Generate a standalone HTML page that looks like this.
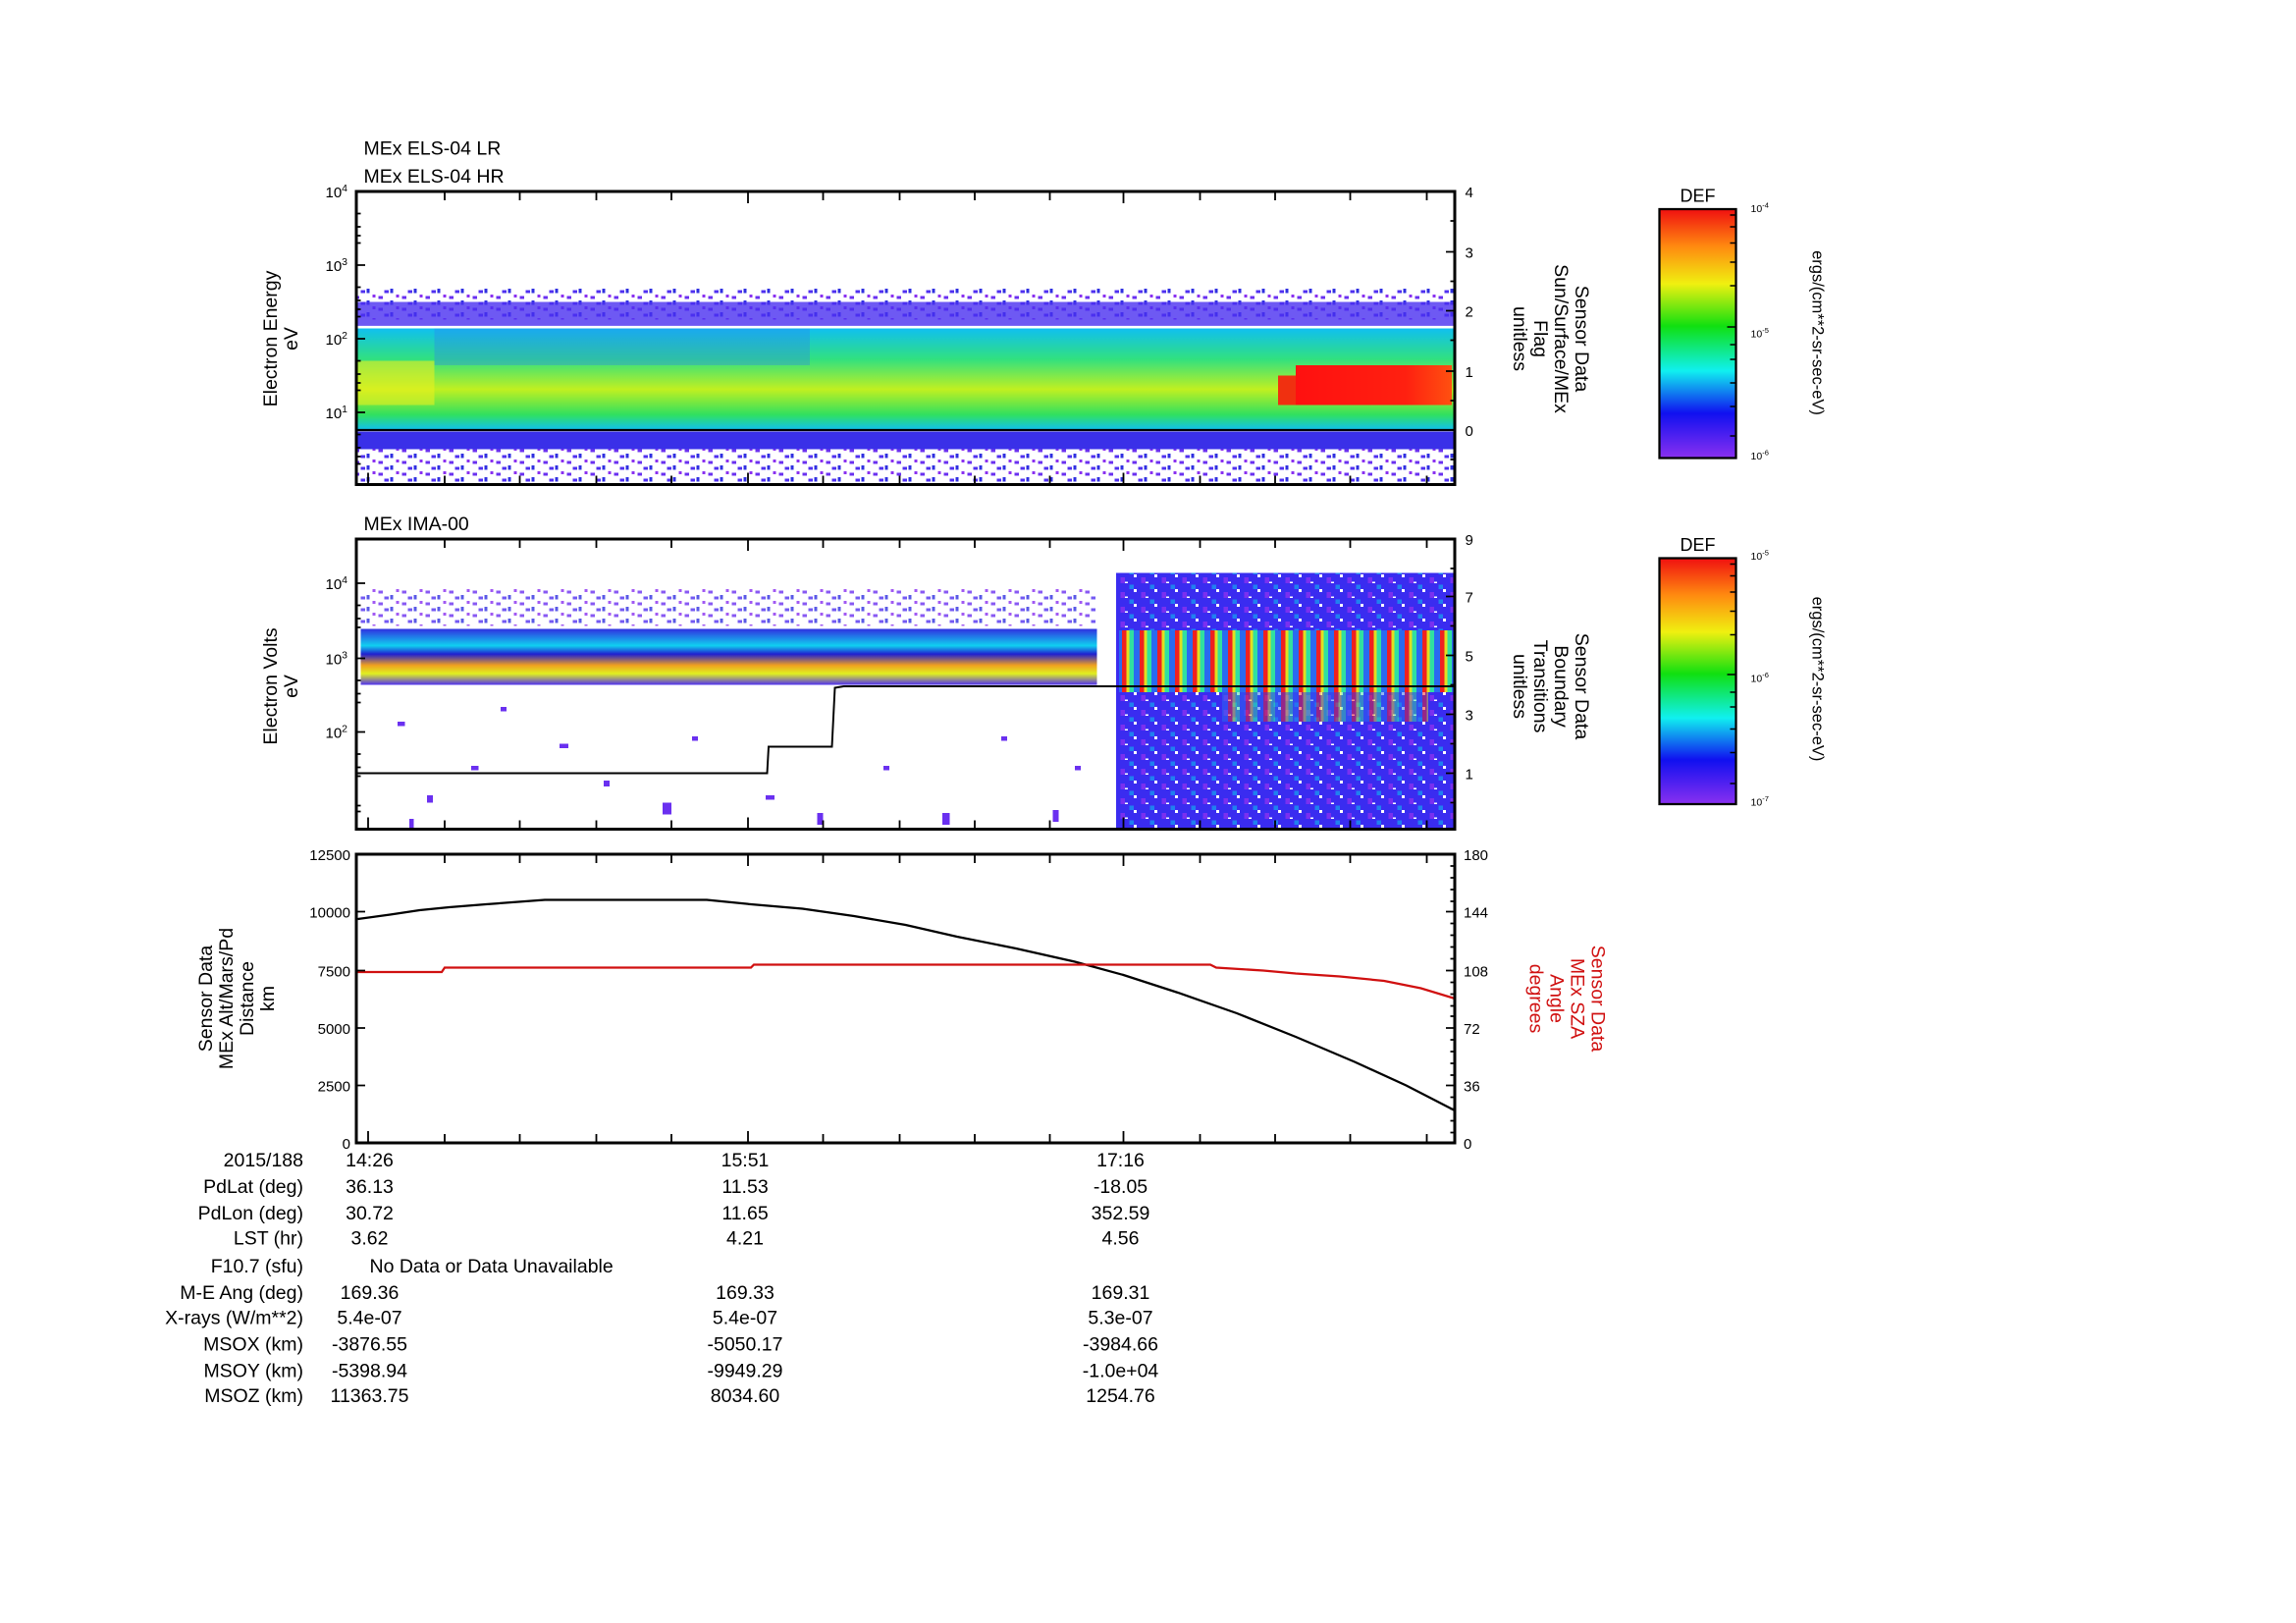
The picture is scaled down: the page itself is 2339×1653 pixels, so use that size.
<!DOCTYPE html>
<html><head><meta charset="utf-8"><style>
html,body{margin:0;padding:0;background:#fff;}
svg{display:block;}
text{font-family:"Liberation Sans",sans-serif;}
</style></head><body>
<svg width="2339" height="1653" viewBox="0 0 1559.33 1102" xmlns="http://www.w3.org/2000/svg">
<defs>
<linearGradient id="cb" x1="0" y1="0" x2="0" y2="1">
<stop offset="0" stop-color="#f01010"/><stop offset="0.15" stop-color="#ff8a10"/><stop offset="0.3" stop-color="#f0f010"/><stop offset="0.47" stop-color="#10e010"/><stop offset="0.65" stop-color="#10f0f0"/><stop offset="0.82" stop-color="#1010f0"/><stop offset="1" stop-color="#8a30f0"/>
</linearGradient>
<linearGradient id="p1b" x1="0" y1="0" x2="0" y2="1">
<stop offset="0" stop-color="#10c0f0"/><stop offset="0.3" stop-color="#30e080"/><stop offset="0.6" stop-color="#c0f020"/><stop offset="0.85" stop-color="#30e060"/><stop offset="1" stop-color="#10c0f0"/>
</linearGradient>
<linearGradient id="red" x1="0" y1="0" x2="1" y2="0">
<stop offset="0" stop-color="#ff1010"/><stop offset="0.7" stop-color="#ff2010"/><stop offset="1" stop-color="#ff5010"/>
</linearGradient>
<linearGradient id="b2" x1="0" y1="0" x2="0" y2="1">
<stop offset="0" stop-color="#3030e0"/><stop offset="0.3" stop-color="#10d0f0"/><stop offset="0.45" stop-color="#2020d0"/><stop offset="0.65" stop-color="#f0a020"/><stop offset="0.8" stop-color="#e0f020"/><stop offset="1" stop-color="#5030f0"/>
</linearGradient>
<pattern id="stripes" x="760" y="0" width="12" height="10" patternUnits="userSpaceOnUse">
<rect width="12" height="10" fill="#2a6af0"/><rect x="2" width="3" height="10" fill="#f02020"/><rect x="5" width="2" height="10" fill="#e0e020"/><rect x="7" width="3" height="10" fill="#30e0a0"/>
</pattern>
<pattern id="mottle" width="14" height="10" patternUnits="userSpaceOnUse">
<rect width="14" height="10" fill="#3a2cf0"/><rect x="0" y="0" width="2" height="2" fill="#fff"/><rect x="8" y="5" width="2" height="1" fill="#fff"/><rect x="5" y="2" width="3" height="4" fill="#7a30f0"/><rect x="11" y="7" width="3" height="3" fill="#2080f0"/>
</pattern>
<pattern id="spk" width="16" height="8" patternUnits="userSpaceOnUse">
<rect width="16" height="8" fill="#fff"/><rect x="1" y="1" width="3" height="2" fill="#6a30f0"/><rect x="9" y="4" width="2" height="3" fill="#3030e0"/><rect x="13" y="0" width="2" height="2" fill="#8a30f0"/><rect x="5" y="5" width="3" height="2" fill="#5030f0"/>
</pattern>
</defs>

<!-- Panel 1 -->
<text x="247" y="105" font-size="13">MEx ELS-04 LR</text>
<text x="247" y="124" font-size="13">MEx ELS-04 HR</text>
<rect x="243" y="195" width="745" height="22" fill="url(#spk)"/>
<rect x="243" y="205" width="745" height="17" fill="#4a30f0" opacity="0.8"/>
<rect x="243" y="223" width="745" height="69" fill="url(#p1b)"/>
<rect x="295" y="223" width="255" height="25" fill="#2a80f0" opacity="0.35"/>
<rect x="243" y="245" width="52" height="30" fill="#e8f020" opacity="0.6"/>
<rect x="243" y="293" width="745" height="12" fill="#3a30e8"/>
<rect x="243" y="305" width="745" height="24" fill="url(#spk)"/>
<rect x="880" y="248" width="106" height="27" fill="url(#red)"/>
<rect x="868" y="255" width="12" height="20" fill="#f03010"/>
<line x1="243" y1="222" x2="988" y2="222" stroke="#fff" stroke-width="1.5"/>
<line x1="243" y1="292" x2="988" y2="292" stroke="#000" stroke-width="1.5"/>
<rect x="242" y="130" width="746" height="199" fill="none" stroke="#000" stroke-width="2"/>

<!-- Panel 2 -->
<text x="247" y="360" font-size="13">MEx IMA-00</text>
<rect x="245" y="400" width="500" height="25" fill="url(#spk)" opacity="0.8"/>
<rect x="245" y="427" width="500" height="38" fill="url(#b2)"/>
<g fill="#6a30f0">
<rect x="270" y="490" width="5" height="3"/><rect x="290" y="540" width="4" height="5"/><rect x="320" y="520" width="5" height="3"/><rect x="380" y="505" width="6" height="3"/><rect x="410" y="530" width="4" height="4"/><rect x="450" y="545" width="6" height="8"/><rect x="470" y="500" width="4" height="3"/><rect x="520" y="540" width="6" height="3"/><rect x="555" y="552" width="4" height="8"/><rect x="600" y="520" width="4" height="3"/><rect x="640" y="552" width="5" height="8"/><rect x="680" y="500" width="4" height="3"/><rect x="715" y="550" width="4" height="8"/><rect x="730" y="520" width="4" height="3"/><rect x="278" y="556" width="3" height="6"/><rect x="340" y="480" width="4" height="3"/>
</g>
<rect x="758" y="389" width="230" height="174" fill="url(#mottle)"/>
<rect x="760" y="428" width="228" height="42" fill="url(#stripes)"/>
<rect x="830" y="470" width="140" height="20" fill="url(#stripes)" opacity="0.5"/>
<polyline points="243,525 521,525 522,507 565,507 567,467 573,466 988,466" fill="none" stroke="#000" stroke-width="1.3"/>
<rect x="242" y="366" width="746" height="197" fill="none" stroke="#000" stroke-width="2"/>

<!-- Panel 3 -->
<polyline points="243,624 265,621 285,618 305,616 330,614 370,611 480,611 510,614 545,617 580,622 615,628 650,636 690,644 730,653 763,662 800,674 840,688 880,704 920,721 955,737 988,754" fill="none" stroke="#000" stroke-width="1.5"/>
<polyline points="243,660 300,660 302,657 510,657 512,655 822,655 826,657 858,659 880,661 910,663 940,666 965,671 988,678" fill="none" stroke="#d01010" stroke-width="1.5"/>
<rect x="242" y="580" width="746" height="196" fill="none" stroke="#000" stroke-width="2"/>

<g stroke="#000" stroke-width="1.2">
<path d="M250 329v-8M302 329v-6M353 329v-6M405 329v-6M456 329v-6M508 329v-8M559 329v-6M611 329v-6M662 329v-6M713 329v-6M763 329v-8M815 329v-6M866 329v-6M917 329v-6M969 329v-6"/>
<path d="M302 130v6M353 130v6M405 130v6M456 130v6M508 130v8M559 130v6M611 130v6M662 130v6M713 130v6M763 130v8M815 130v6M866 130v6M917 130v6M969 130v6"/>
<path d="M250 563v-8M302 563v-6M353 563v-6M405 563v-6M456 563v-6M508 563v-8M559 563v-6M611 563v-6M662 563v-6M713 563v-6M763 563v-8M815 563v-6M866 563v-6M917 563v-6M969 563v-6"/>
<path d="M302 366v6M353 366v6M405 366v6M456 366v6M508 366v8M559 366v6M611 366v6M662 366v6M713 366v6M763 366v8M815 366v6M866 366v6M917 366v6M969 366v6"/>
<path d="M250 776v-8M302 776v-6M353 776v-6M405 776v-6M456 776v-6M508 776v-8M559 776v-6M611 776v-6M662 776v-6M713 776v-6M763 776v-8M815 776v-6M866 776v-6M917 776v-6M969 776v-6"/>
<path d="M302 580v6M353 580v6M405 580v6M456 580v6M508 580v8M559 580v6M611 580v6M662 580v6M713 580v6M763 580v8M815 580v6M866 580v6M917 580v6M969 580v6"/>
<path d="M242 130h6M242 180h6M242 230h6M242 280h6M242 145h3M242 154h3M242 160h3M242 165h3M242 195h3M242 204h3M242 210h3M242 215h3M242 245h3M242 254h3M242 260h3M242 265h3M242 295h3M242 304h3M242 310h3M242 315h3"/>
<path d="M988 130h-6M988 171h-6M988 211h-6M988 252h-6M988 292h-6M988 150h-3M988 191h-3M988 231h-3M988 272h-3M988 312h-3"/>
<path d="M242 396h6M242 447h6M242 497h6M242 411h3M242 420h3M242 426h3M242 462h3M242 471h3M242 477h3M242 512h3M242 521h3M242 527h3M242 547h3M242 551h3"/>
<path d="M988 366h-6M988 405h-6M988 445h-6M988 485h-6M988 525h-6M988 386h-3M988 425h-3M988 465h-3M988 505h-3M988 545h-3"/>
<path d="M242 580h6M242 619h6M242 659h6M242 698h6M242 737h6M242 776h6"/>
<path d="M988 580h-6M988 619h-6M988 659h-6M988 698h-6M988 737h-6M988 588h-3M988 596h-3M988 604h-3M988 612h-3M988 627h-3M988 635h-3M988 643h-3M988 651h-3M988 667h-3M988 675h-3M988 683h-3M988 690h-3M988 706h-3M988 714h-3M988 722h-3M988 730h-3M988 745h-3M988 753h-3M988 761h-3M988 769h-3"/>
</g>

<g font-size="10" text-anchor="end">
<text x="236" y="134">10<tspan font-size="7" dy="-4">4</tspan></text>
<text x="236" y="184">10<tspan font-size="7" dy="-4">3</tspan></text>
<text x="236" y="234">10<tspan font-size="7" dy="-4">2</tspan></text>
<text x="236" y="284">10<tspan font-size="7" dy="-4">1</tspan></text>
<text x="236" y="400">10<tspan font-size="7" dy="-4">4</tspan></text>
<text x="236" y="451">10<tspan font-size="7" dy="-4">3</tspan></text>
<text x="236" y="501">10<tspan font-size="7" dy="-4">2</tspan></text>
<text x="238" y="584">12500</text><text x="238" y="623">10000</text><text x="238" y="663">7500</text><text x="238" y="702">5000</text><text x="238" y="741">2500</text><text x="238" y="780">0</text>
</g>
<g font-size="10">
<text x="995" y="134">4</text><text x="995" y="175">3</text><text x="995" y="215">2</text><text x="995" y="256">1</text><text x="995" y="296">0</text>
<text x="995" y="370">9</text><text x="995" y="409">7</text><text x="995" y="449">5</text><text x="995" y="489">3</text><text x="995" y="529">1</text>
<text x="994" y="584">180</text><text x="994" y="623">144</text><text x="994" y="663">108</text><text x="994" y="702">72</text><text x="994" y="741">36</text><text x="994" y="780">0</text>
</g>

<g font-size="13" text-anchor="middle">
<text transform="translate(188,230) rotate(-90)">Electron Energy</text>
<text transform="translate(202,230) rotate(-90)">eV</text>
<text transform="translate(188,466) rotate(-90)">Electron Volts</text>
<text transform="translate(202,466) rotate(-90)">eV</text>
<text transform="translate(1070,230) rotate(90)">Sensor Data</text>
<text transform="translate(1056,230) rotate(90)">Sun/Surface/MEx</text>
<text transform="translate(1042,230) rotate(90)">Flag</text>
<text transform="translate(1028,230) rotate(90)">unitless</text>
<text transform="translate(1070,466) rotate(90)">Sensor Data</text>
<text transform="translate(1056,466) rotate(90)">Boundary</text>
<text transform="translate(1042,466) rotate(90)">Transitions</text>
<text transform="translate(1028,466) rotate(90)">unitless</text>
<text transform="translate(144,678) rotate(-90)">Sensor Data</text>
<text transform="translate(158,678) rotate(-90)">MEx Alt/Mars/Pd</text>
<text transform="translate(172,678) rotate(-90)">Distance</text>
<text transform="translate(186,678) rotate(-90)">km</text>
<text style="fill:#d01010" transform="translate(1081,678) rotate(90)">Sensor Data</text>
<text style="fill:#d01010" transform="translate(1067,678) rotate(90)">MEx SZA</text>
<text style="fill:#d01010" transform="translate(1053,678) rotate(90)">Angle</text>
<text style="fill:#d01010" transform="translate(1039,678) rotate(90)">degrees</text>
</g>

<text x="1153" y="137" font-size="12" text-anchor="middle">DEF</text>
<rect x="1127" y="142" width="52" height="169" fill="url(#cb)" stroke="#000" stroke-width="1.5"/>
<text x="1189" y="144" font-size="7">10<tspan font-size="5" dy="-3">-4</tspan></text>
<text x="1189" y="229" font-size="7">10<tspan font-size="5" dy="-3">-5</tspan></text>
<text x="1189" y="312" font-size="7">10<tspan font-size="5" dy="-3">-6</tspan></text>
<g stroke="#000" stroke-width="1"><path d="M1179 146h-4M1179 154h-4M1179 165h-4M1179 178h-4M1179 194h-4M1179 222h-6M1179 234h-4M1179 244h-4M1179 260h-4M1179 276h-4M1179 296h-4"/></g>
<text transform="translate(1231,226) rotate(90)" font-size="11" text-anchor="middle">ergs/(cm**2-sr-sec-eV)</text>

<text x="1153" y="374" font-size="12" text-anchor="middle">DEF</text>
<rect x="1127" y="379" width="52" height="167" fill="url(#cb)" stroke="#000" stroke-width="1.5"/>
<text x="1189" y="380" font-size="7">10<tspan font-size="5" dy="-3">-5</tspan></text>
<text x="1189" y="463" font-size="7">10<tspan font-size="5" dy="-3">-6</tspan></text>
<text x="1189" y="547" font-size="7">10<tspan font-size="5" dy="-3">-7</tspan></text>
<g stroke="#000" stroke-width="1"><path d="M1179 383h-4M1179 391h-4M1179 402h-4M1179 415h-4M1179 431h-4M1179 458h-6M1179 470h-4M1179 480h-4M1179 495h-4M1179 511h-4M1179 532h-4"/></g>
<text transform="translate(1231,461) rotate(90)" font-size="11" text-anchor="middle">ergs/(cm**2-sr-sec-eV)</text>

<g font-size="13">
<g text-anchor="end">
<text x="206" y="792">2015/188</text><text x="206" y="810">PdLat (deg)</text><text x="206" y="828">PdLon (deg)</text><text x="206" y="845">LST (hr)</text><text x="206" y="864">F10.7 (sfu)</text><text x="206" y="882">M-E Ang (deg)</text><text x="206" y="899">X-rays (W/m**2)</text><text x="206" y="917">MSOX (km)</text><text x="206" y="935">MSOY (km)</text><text x="206" y="952">MSOZ (km)</text>
</g>
<g text-anchor="middle">
<text x="251" y="792">14:26</text><text x="251" y="810">36.13</text><text x="251" y="828">30.72</text><text x="251" y="845">3.62</text><text x="251" y="882">169.36</text><text x="251" y="899">5.4e-07</text><text x="251" y="917">-3876.55</text><text x="251" y="935">-5398.94</text><text x="251" y="952">11363.75</text>
<text x="506" y="792">15:51</text><text x="506" y="810">11.53</text><text x="506" y="828">11.65</text><text x="506" y="845">4.21</text><text x="506" y="882">169.33</text><text x="506" y="899">5.4e-07</text><text x="506" y="917">-5050.17</text><text x="506" y="935">-9949.29</text><text x="506" y="952">8034.60</text>
<text x="761" y="792">17:16</text><text x="761" y="810">-18.05</text><text x="761" y="828">352.59</text><text x="761" y="845">4.56</text><text x="761" y="882">169.31</text><text x="761" y="899">5.3e-07</text><text x="761" y="917">-3984.66</text><text x="761" y="935">-1.0e+04</text><text x="761" y="952">1254.76</text>
</g>
<text x="251" y="864">No Data or Data Unavailable</text>
</g>
</svg>
</body></html>
